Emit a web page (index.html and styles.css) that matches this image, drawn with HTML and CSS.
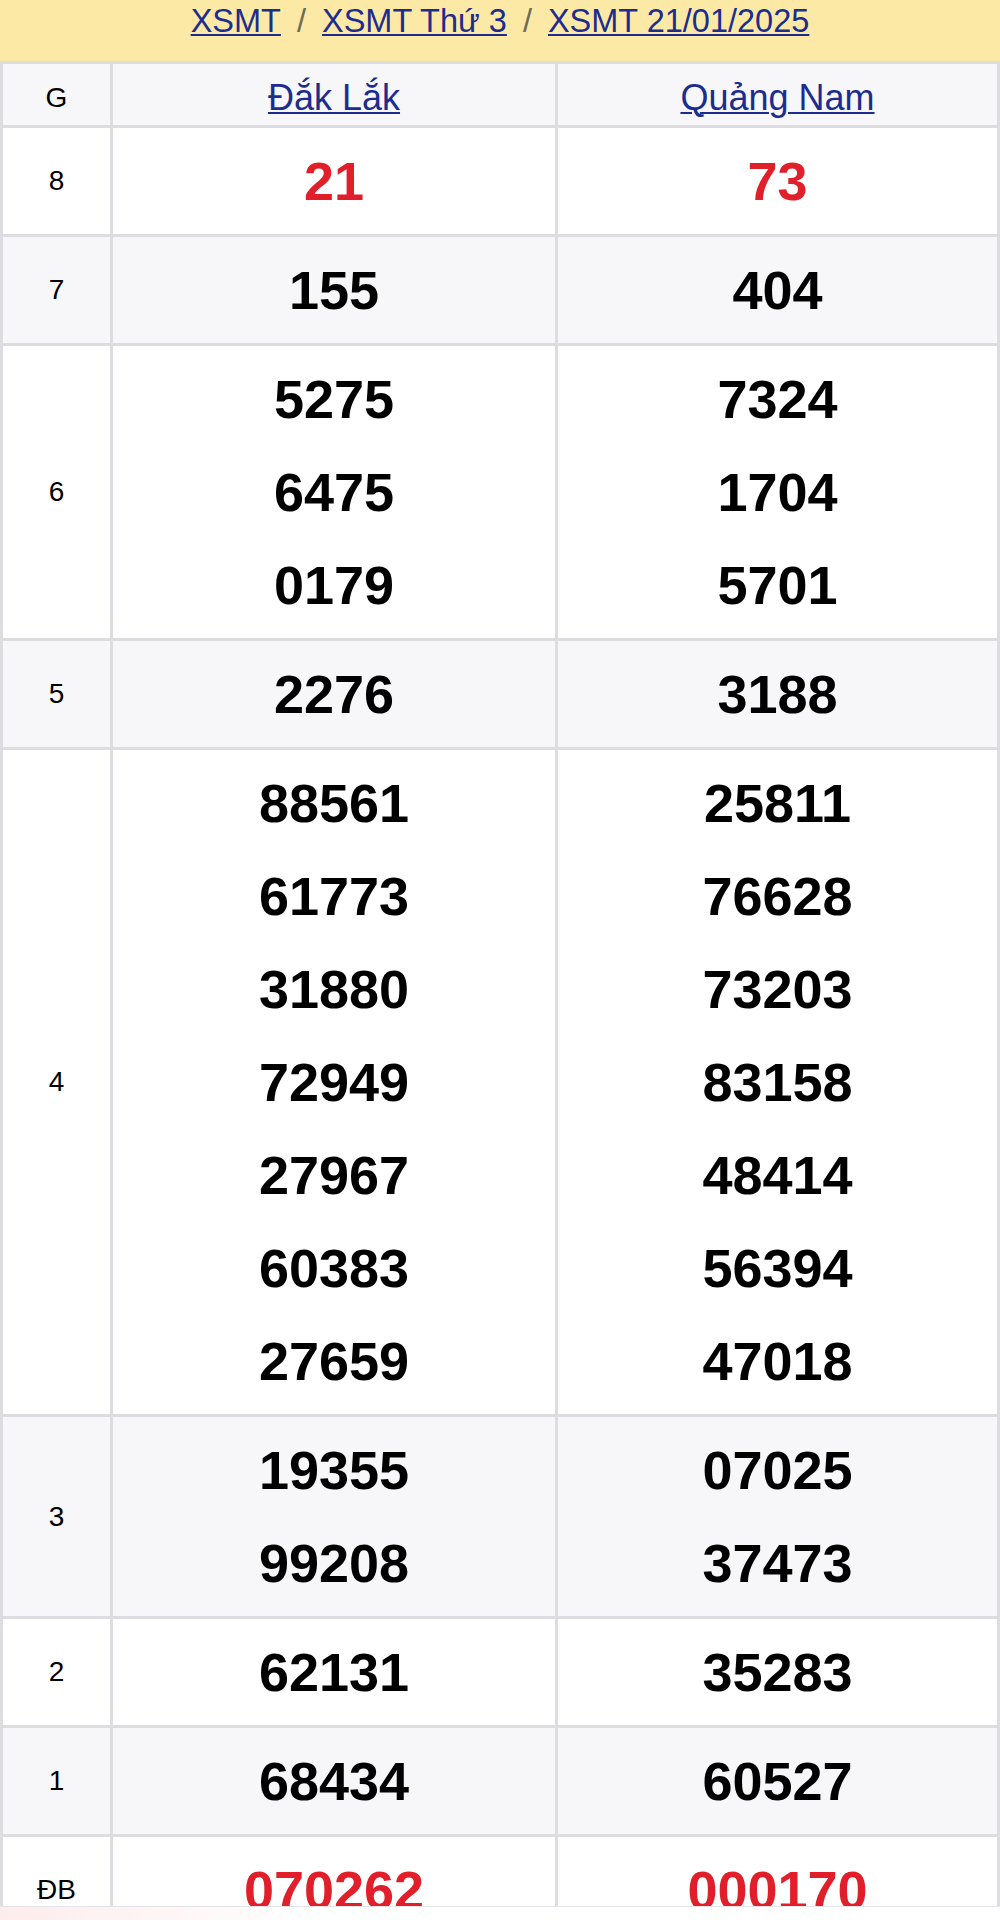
FILE: index.html
```html
<!DOCTYPE html>
<html lang="vi">
<head>
<meta charset="utf-8">
<title>XSMT 21/01/2025</title>
<link rel="stylesheet" href="styles.css">
</head>
<body>
<nav class="crumbs">
  <a href="#">XSMT</a><span class="sep">/</span><a href="#">XSMT Thứ 3</a><span class="sep">/</span><a href="#">XSMT 21/01/2025</a>
</nav>
<div class="results">
  <div class="row head">
    <div class="cell label">G</div>
    <div class="cell prov"><a href="#">Đắk Lắk</a></div>
    <div class="cell prov"><a href="#">Quảng Nam</a></div>
  </div>
  <div class="row">
    <div class="cell label">8</div>
    <div class="cell nums red"><div>21</div></div>
    <div class="cell nums red"><div>73</div></div>
  </div>
  <div class="row alt">
    <div class="cell label">7</div>
    <div class="cell nums"><div>155</div></div>
    <div class="cell nums"><div>404</div></div>
  </div>
  <div class="row">
    <div class="cell label">6</div>
    <div class="cell nums"><div>5275</div><div>6475</div><div>0179</div></div>
    <div class="cell nums"><div>7324</div><div>1704</div><div>5701</div></div>
  </div>
  <div class="row alt">
    <div class="cell label">5</div>
    <div class="cell nums"><div>2276</div></div>
    <div class="cell nums"><div>3188</div></div>
  </div>
  <div class="row">
    <div class="cell label">4</div>
    <div class="cell nums"><div>88561</div><div>61773</div><div>31880</div><div>72949</div><div>27967</div><div>60383</div><div>27659</div></div>
    <div class="cell nums"><div>25811</div><div>76628</div><div>73203</div><div>83158</div><div>48414</div><div>56394</div><div>47018</div></div>
  </div>
  <div class="row alt">
    <div class="cell label">3</div>
    <div class="cell nums"><div>19355</div><div>99208</div></div>
    <div class="cell nums"><div>07025</div><div>37473</div></div>
  </div>
  <div class="row">
    <div class="cell label">2</div>
    <div class="cell nums"><div>62131</div></div>
    <div class="cell nums"><div>35283</div></div>
  </div>
  <div class="row alt">
    <div class="cell label">1</div>
    <div class="cell nums"><div>68434</div></div>
    <div class="cell nums"><div>60527</div></div>
  </div>
  <div class="row">
    <div class="cell label">ĐB</div>
    <div class="cell nums red"><div>070262</div></div>
    <div class="cell nums red"><div>000170</div></div>
  </div>
</div>
<div class="bottom-bar"></div>
</body>
</html>
```

FILE: styles.css
```css
html, body {
  margin: 0;
  padding: 0;
  background: #ffffff;
  font-family: "Liberation Sans", Arial, Helvetica, sans-serif;
  color: #000;
}

.crumbs {
  height: 61px;
  box-sizing: border-box;
  padding-top: 1px;
  background: #fce9a6;
  text-align: center;
  font-size: 32.5px;
  line-height: 40px;
  white-space: nowrap;
}

.crumbs a {
  color: #1d2c8f;
  text-decoration: underline;
  text-decoration-thickness: 2px;
  text-underline-offset: 2px;
}

.crumbs .sep {
  display: inline-block;
  margin: 0 16px;
  color: #6f6a5a;
}

.results {
  display: flex;
  flex-direction: column;
  gap: 3px;
  padding: 3px;
  background: #dcdce1;
}

.row {
  display: grid;
  grid-template-columns: 107px 442px 439px;
  gap: 3px;
}

.cell {
  background: #ffffff;
}

.row.alt .cell,
.row.head .cell {
  background: #f7f7f9;
}

.row.head .cell {
  height: 61px;
  box-sizing: border-box;
  padding-top: 6px;
}

.label {
  display: flex;
  align-items: center;
  justify-content: center;
  font-size: 28px;
}

.prov {
  display: flex;
  align-items: center;
  justify-content: center;
  font-size: 36px;
}

.prov a {
  color: #1d2c8f;
  text-decoration: underline;
  text-decoration-thickness: 2px;
  text-underline-offset: 2px;
}

.nums {
  padding: 6.5px 0;
  text-align: center;
  font-size: 54px;
  font-weight: 700;
  line-height: 93px;
}

.nums.red {
  color: #e11f2a;
}

.bottom-bar {
  position: fixed;
  left: 0;
  right: 0;
  bottom: 0;
  height: 13px;
  border-top: 1px solid #e4e4e8;
  background: linear-gradient(to right, #fdecec 0%, #ffffff 32%);
}
```
